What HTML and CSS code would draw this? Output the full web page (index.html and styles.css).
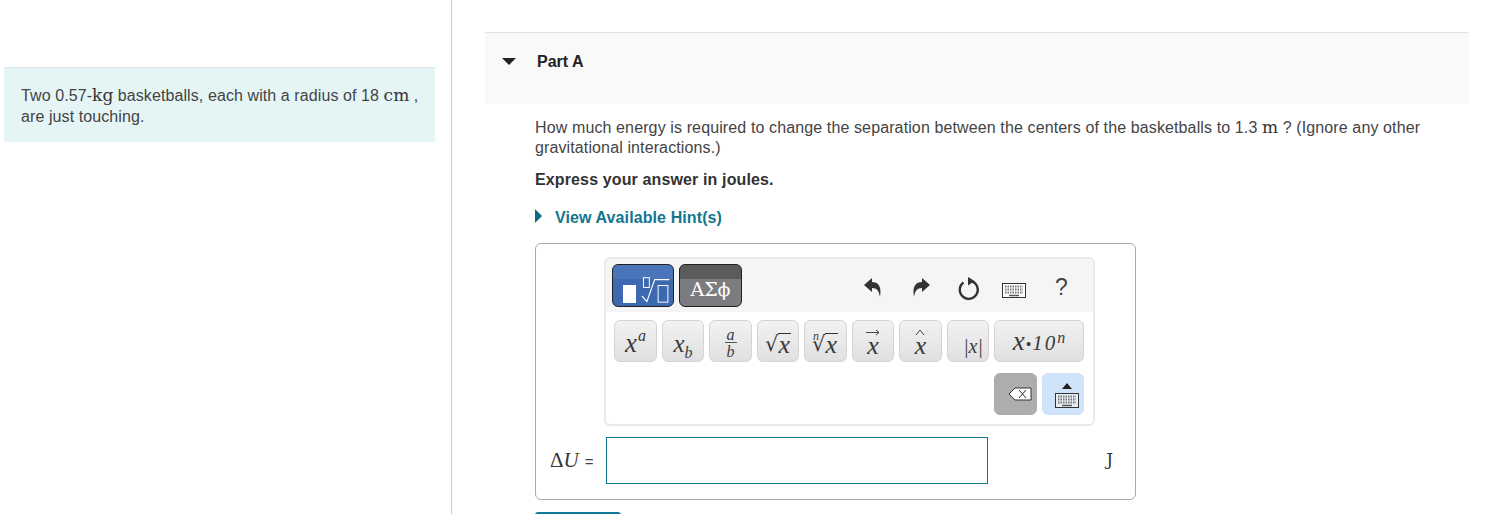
FILE: index.html
```html
<!DOCTYPE html>
<html lang="en">
<head>
    <meta charset="UTF-8">
    <title>Part A</title>
    <link rel="stylesheet" href="styles.css">
</head>
<body>
    <div class="container">
        <aside class="intro-col">
            <div class="intro">Two 0.57-<span class="unit">kg</span> basketballs, each with a radius of 18 <span class="unit">cm</span> , are just touching.</div>
        </aside>

        <main class="part-col">
            <div class="part-head">
                <span class="arrow-down"></span>
                <span class="part-title">Part A</span>
            </div>

            <section class="part-body">
                <p class="question">How much energy is required to change the separation between the centers of the basketballs to 1.3 <span class="unit">m</span> ? (Ignore any other gravitational interactions.)</p>
                <p class="express">Express your answer in joules.</p>
                <div class="hint"><span class="arrow-right"></span><span>View Available Hint(s)</span></div>

                <div class="answer-box">
                    <div class="editor">
                        <div class="tool-top">
                            <div class="mode mode-templates">
                                <span class="small-box"></span>
                                <svg width="34" height="34" viewBox="0 0 34 34">
                                    <rect x="3.5" y="8.5" width="6" height="10" fill="none" stroke="#fff"/>
                                    <path d="M2 27 L7 33 L15 10.5 H30" fill="none" stroke="#fff" stroke-width="1.2"/>
                                    <rect x="18.5" y="16.5" width="10" height="17" fill="none" stroke="#fff"/>
                                </svg>
                            </div>
                            <div class="mode mode-symbols">ΑΣϕ</div>
                            <div class="tool-icons">
                                <svg class="tool-icon" width="20" height="24" viewBox="0 0 20 24"><path d="M1 9 L9 2 V6 C15 6 19 10 17 21 C16 15 14 12 9 12 V16 Z" fill="#333"/></svg>
                                <svg class="tool-icon icon-redo" width="20" height="24" viewBox="0 0 20 24"><path d="M19 9 L11 2 V6 C5 6 1 10 3 21 C4 15 6 12 11 12 V16 Z" fill="#333"/></svg>
                                <svg class="tool-icon" width="22" height="24" viewBox="0 0 22 24"><path d="M6.5 6.5 A9 9 0 1 0 12 4.8" fill="none" stroke="#333" stroke-width="2.4"/><path d="M11 1 L17.5 5 L11 9.5 Z" fill="#333"/></svg>
                                <svg class="tool-icon kbd-wide" width="24" height="15" viewBox="0 0 24 15">
                                    <rect x="0.5" y="0.5" width="23" height="14" fill="#fff" stroke="#333"/>
                                    <path d="M3 3.5 H21 M3 6.5 H21 M3 9.5 H21" stroke="#777" stroke-width="2" stroke-dasharray="1.5 1"/>
                                    <path d="M7 12.5 H17" stroke="#555" stroke-width="1.5"/>
                                </svg>
                                <span class="help">?</span>
                            </div>
                        </div>

                        <div class="keys">
                            <button class="key"><span class="big">x<sup>a</sup></span></button>
                            <button class="key"><span class="mid">x<sub>b</sub></span></button>
                            <button class="key"><span class="frac"><span class="num">a</span><span class="den">b</span></span></button>
                            <button class="key"><span class="root"><span class="rad">√</span><span class="over">x</span></span></button>
                            <button class="key"><span class="root"><sup class="root-n">n</sup><span class="rad">√</span><span class="over">x</span></span></button>
                            <button class="key">
                                <span class="accent">
                                    <svg width="14" height="7" viewBox="0 0 14 7"><path d="M0 3.5 H13 M10 1 L13 3.5 L10 6" fill="none" stroke="#444"/></svg>
                                    <span>x</span>
                                </span>
                            </button>
                            <button class="key">
                                <span class="accent">
                                    <svg width="10" height="7" viewBox="0 0 10 7"><path d="M1 6 L5 1 L9 6" fill="none" stroke="#444"/></svg>
                                    <span>x</span>
                                </span>
                            </button>
                            <button class="key key-abs"><span class="abs">|x|</span></button>
                            <button class="key key-wide"><span class="sci">x<span class="dot">•</span><span class="digits">10</span><sup>n</sup></span></button>
                        </div>

                        <div class="keys keys-end">
                            <button class="key key-delete">
                                <svg width="24" height="14" viewBox="0 0 24 14"><path d="M7 1 H23 V13 H7 L1 7 Z" fill="#fff" stroke="#333"/><path d="M11 3 L18 11 M18 3 L11 11" stroke="#333"/></svg>
                            </button>
                            <button class="key key-kbd">
                                <span class="kbd-arrow"></span>
                                <svg width="24" height="15" viewBox="0 0 24 15">
                                    <rect x="0.5" y="0.5" width="23" height="14" fill="#e8eef5" stroke="#333"/>
                                    <path d="M3 3.5 H21 M3 6.5 H21 M3 9.5 H21" stroke="#777" stroke-width="2" stroke-dasharray="1.5 1"/>
                                    <path d="M7 12.5 H17" stroke="#555" stroke-width="1.5"/>
                                </svg>
                            </button>
                        </div>
                    </div>

                    <div class="answer-row">
                        <span class="answer-label"><span class="math">Δ<i>U</i></span> =</span>
                        <div class="answer-input"></div>
                        <span class="answer-unit">J</span>
                    </div>
                </div>

                <div class="submit"></div>
            </section>
        </main>
    </div>
</body>
</html>
```

FILE: styles.css
```css
body, html {
    font-family: "Liberation Sans", Arial, sans-serif;
    background-color: #fff;
    color: #333;
    margin: 0;
    padding: 0;
    height: 100%;
    overflow: hidden;
}
.container {
    display: flex;
    height: 514px;
    overflow: hidden;
}
.intro-col {
    box-sizing: border-box;
    border-right: 1px solid #ccc;
    flex: none;
    width: 452px;
    padding: 67px 16px 0 4px;
}
.intro {
    background-color: #e5f5f6;
    border-top: 1px solid #d9e4e6;
    padding: 17px 10px 15px 17px;
    font-size: 16px;
    line-height: 21px;
    letter-spacing: 0.09px;
    color: #444;
}
.unit {
    font-family: "DejaVu Serif", "Liberation Serif", serif;
    font-size: 17px;
    line-height: 0;
    letter-spacing: 0;
    color: #333;
}
.part-col {
    flex: none;
    width: 984px;
    margin-left: 33px;
    padding-top: 32px;
}
.part-head {
    background-color: #f9f9f9;
    border-top: 1px solid #e2e2e2;
    display: flex;
    align-items: flex-start;
    padding-top: 19px;
    height: 52px;
}
.arrow-down {
    width: 0;
    height: 0;
    margin: 6px 0 0 17px;
    border-left: 7px solid transparent;
    border-right: 7px solid transparent;
    border-top: 7px solid #222;
}
.part-title {
    margin-left: 21px;
    font-size: 16px;
    font-weight: bold;
    line-height: 20px;
    color: #222;
}
.part-body {
    padding: 14px 0 0 50px;
}
.question {
    margin: 0;
    font-size: 16px;
    line-height: 20px;
    letter-spacing: 0.12px;
    width: 900px;
    color: #444;
}
.express {
    margin: 12px 0 0;
    font-size: 16px;
    font-weight: bold;
    line-height: 19px;
    letter-spacing: 0.13px;
    color: #333;
}
.hint {
    display: flex;
    margin-top: 19px;
    font-size: 16px;
    font-weight: bold;
    line-height: 20px;
    letter-spacing: 0.1px;
    color: #13768f;
}
.arrow-right {
    width: 0;
    height: 0;
    margin: 1px 13px 0 0;
    border-top: 7px solid transparent;
    border-bottom: 7px solid transparent;
    border-left: 7px solid #0f6b85;
}
.answer-box {
    margin-top: 15px;
    width: 601px;
    height: 257px;
    box-sizing: border-box;
    border: 1px solid #aaa;
    border-radius: 6px;
    padding: 13px 0 0 68px;
}
.editor {
    width: 491px;
    height: 169px;
    box-sizing: border-box;
    border: 2px solid #e9e9e9;
    border-radius: 6px;
    background-color: #fff;
}
.tool-top {
    display: flex;
    height: 53px;
    background-color: #f5f5f5;
    border-radius: 4px 4px 0 0;
    padding: 5px 0 0 6px;
    box-sizing: border-box;
    gap: 5px;
}
.mode {
    height: 43px;
    box-sizing: border-box;
    border: 1px solid #222;
    border-radius: 6px;
    display: flex;
    color: #fff;
}
.mode-templates {
    width: 62px;
    background: linear-gradient(#4b75bb 0 14px, #3c69af 14px);
    align-items: flex-end;
    padding: 0 0 3px 10px;
    gap: 4px;
}
.small-box {
    width: 13px;
    height: 18px;
    background-color: #fff;
}
.mode-symbols {
    width: 63px;
    background: linear-gradient(#5b5b5b 0 14px, #7c7c80 14px);
    font-family: "DejaVu Serif", serif;
    font-size: 19px;
    align-items: flex-end;
    justify-content: center;
    padding-bottom: 6px;
    line-height: 22px;
}
.tool-icons {
    display: flex;
    align-items: center;
    margin: 0 0 1px 116px;
}
.tool-icon {
    margin-right: 28px;
    flex: none;
}
.icon-redo {
    margin-right: 26px;
}
.kbd-wide {
    margin-left: -5px;
    margin-right: 29px;
    margin-top: 5px;
}
.help {
    font-family: "Liberation Sans", sans-serif;
    font-size: 23px;
    color: #444;
}
.keys {
    display: flex;
    gap: 5px;
    margin: 8px 0 0 8px;
}
.keys-end {
    justify-content: flex-end;
    margin: 11px 9px 0 0;
}
.key {
    width: 43px;
    height: 42px;
    padding: 0;
    box-sizing: border-box;
    border: 1px solid #d4d4d4;
    border-radius: 6px;
    background: linear-gradient(#f2f2f2, #e0e0e0);
    font-family: "Liberation Serif", serif;
    font-style: italic;
    color: #3a3a3a;
    display: flex;
    align-items: center;
    justify-content: center;
    overflow: hidden;
}
.key:nth-child(even) {
    width: 42px;
}
.big {
    font-size: 27px;
    line-height: 28px;
    margin-top: 4px;
}
.big sup {
    font-size: 16px;
    line-height: 0;
    margin-left: 1px;
    vertical-align: 11px;
}
.mid {
    font-size: 25px;
    line-height: 28px;
    margin-top: 6px;
}
.mid sub {
    font-size: 16px;
    line-height: 0;
}
.frac {
    display: flex;
    flex-direction: column;
    align-items: center;
    font-size: 16px;
    line-height: 13px;
    margin-top: 3px;
}
.num {
    border-bottom: 1px solid #555;
    padding: 0 2px 1px;
    margin-bottom: 2px;
}
.root {
    display: flex;
    align-items: flex-end;
    font-size: 26px;
    line-height: 22px;
    margin-top: 5px;
}
.rad {
    font-family: "DejaVu Sans", sans-serif;
    font-style: normal;
    font-size: 21px;
    line-height: 24px;
}
.over {
    border-top: 1px solid #333;
    padding-right: 1px;
}
.root-n {
    margin: 0 -7px 16px 0;
    font-size: 12px;
    line-height: 8px;
}
.accent {
    display: flex;
    flex-direction: column;
    align-items: center;
    font-size: 26px;
    line-height: 20px;
    margin-top: 3px;
}
.accent svg {
    display: block;
}
.key-abs {
    align-items: flex-end;
    justify-content: flex-end;
    padding: 0 5px 5px 0;
}
.abs {
    font-size: 20px;
    line-height: 20px;
}
.key-wide {
    width: 90px;
}
.sci {
    font-size: 27px;
    line-height: 28px;
    margin-top: 3px;
    white-space: nowrap;
}
.dot {
    font-style: normal;
    font-size: 16px;
    margin: 0 1px;
}
.digits {
    font-size: 21px;
    letter-spacing: 2px;
}
.sci sup {
    font-size: 16px;
    line-height: 0;
    vertical-align: 7px;
}
.key-delete {
    background: #adadad;
    border-color: #adadad;
    justify-content: flex-end;
    align-items: flex-start;
    padding: 13px 4px 0 0;
}
.key-kbd {
    background: #cfe4fb;
    border-color: #d0e0f0;
    flex-direction: column;
    padding: 3px 0 0 7px;
    gap: 4px;
}
.kbd-arrow {
    width: 0;
    height: 0;
    border-left: 5px solid transparent;
    border-right: 5px solid transparent;
    border-bottom: 6px solid #222;
}
.answer-row {
    display: flex;
    align-items: center;
    margin: 11px 0 0 -54px;
    height: 47px;
    width: 563px;
}
.answer-label {
    width: 56px;
    font-size: 15px;
    flex: none;
    color: #444;
    word-spacing: 2px;
}
.math {
    font-family: "Liberation Serif", serif;
    font-size: 21px;
    color: #333;
}
.answer-input {
    width: 382px;
    height: 47px;
    box-sizing: border-box;
    border: 1px solid #13768f;
    flex: none;
}
.answer-unit {
    font-family: "DejaVu Serif", serif;
    font-size: 17px;
    margin-left: auto;
    margin-top: -3px;
}
.submit {
    margin-top: 12px;
    width: 86px;
    height: 40px;
    background-color: #0f7a95;
    border-radius: 3px;
}
```
